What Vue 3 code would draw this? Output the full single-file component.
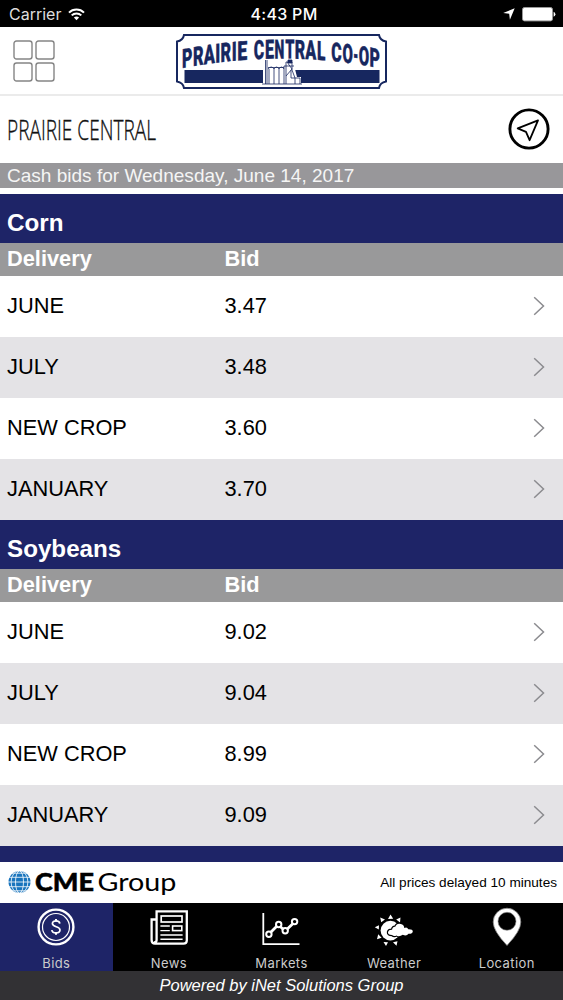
<template>
  <div class="app">
    <!-- 状态栏 -->
    <div class="status-bar">
      <div class="status-left">
        <span>Carrier</span>
        <svg width="17" height="13" viewBox="0 0 17 13" fill="none" stroke="#fff" stroke-width="2">
          <path d="M1 4.6C5 0.4 12 0.4 16 4.6" />
          <path d="M3.7 7.4C6.3 4.8 10.7 4.8 13.3 7.4" />
          <path d="M8.5 12.2L5.9 9.6C7.4 8.2 9.6 8.2 11.1 9.6Z" fill="#fff" stroke="none" />
        </svg>
      </div>
      <span class="status-time">4:43 PM</span>
      <div class="status-right">
        <svg width="12" height="12" viewBox="0 0 12 12">
          <path d="M11.7 0.2L6.9 11.8L6.2 5.8L0.2 5.1Z" fill="#fff" />
        </svg>
        <svg width="34" height="15" viewBox="0 0 34 15">
          <rect x="0.5" y="0.5" width="30" height="13.4" rx="2" fill="#fff" stroke="#999" />
          <path d="M31.6 4.7Q33.4 5.3 33.4 7.2Q33.4 9.1 31.6 9.7Z" fill="#fff" />
        </svg>
      </div>
    </div>

    <!-- 顶部 logo -->
    <header class="header">
      <svg class="menu" width="42" height="42" viewBox="0 0 42 42" fill="#fff" stroke="#858585" stroke-width="1.4">
        <rect x="1" y="1" width="18" height="18" rx="2.5" />
        <rect x="23" y="1" width="18" height="18" rx="2.5" />
        <rect x="1" y="23" width="18" height="18" rx="2.5" />
        <rect x="23" y="23" width="18" height="18" rx="2.5" />
      </svg>
      <svg class="logo" width="211" height="55" viewBox="0 0 211 55">
        <path
          d="M8 1H203Q204 6.5 210 7.5V47.5Q204 48.5 203 54H8Q7 48.5 1 47.5V7.5Q7 6.5 8 1Z"
          fill="#fff"
          stroke="#17275f"
          stroke-width="2"
        />
        <rect x="8.5" y="36" width="195" height="13" fill="#17275f" />
        <text
          v-for="(item, index) in logoLetters"
          :key="index"
          class="logo-letter"
          :transform="letterTransform(item)"
          :textLength="item.w + 0.4"
          lengthAdjust="spacingAndGlyphs"
        >{{ item.c }}</text>
        <path d="M87 50.5V34H92V32H107V30L109 26H116L118 31L121 43H125V50.5Z" fill="#fff" />
        <g fill="none" stroke="#17275f" stroke-width="0.8">
          <path d="M89.5 50V26M91 50V26M92 33.5H108M93 35V50M98 35V50M103 35V50M108 32V50" />
          <path d="M92 35Q95.5 31 98 35Q100.5 31 103 35Q105.5 31 108 35" />
          <path d="M110 50V28H116V36L119 44V50M108 32H118M111 28L116 35L110 42M115 36V44H124V50M86 50H126" />
          <path d="M112 26H116V29H112Z" fill="#17275f" />
        </g>
      </svg>
    </header>

    <div class="title-row">
      <svg class="title" width="156" height="46" viewBox="0 0 156 46">
        <text x="0" y="33" textLength="149" lengthAdjust="spacingAndGlyphs">PRAIRIE CENTRAL</text>
      </svg>
      <svg class="locate" width="42" height="42" viewBox="0 0 42 42" fill="none" stroke="#000">
        <circle cx="21" cy="21" r="19.1" stroke-width="2.9" />
        <path d="M30 12.3L9.7 20.4L18 23.8L21.6 32.2Z" stroke-width="1.8" stroke-linejoin="round" />
      </svg>
    </div>
    <div class="date-bar">Cash bids for Wednesday, June 14, 2017</div>

    <!-- 报价列表 -->
    <main class="bids">
      <section v-for="crop in crops" :key="crop.name">
        <h2>{{ crop.name }}</h2>
        <div class="columns">
          <span>Delivery</span>
          <span>Bid</span>
        </div>
        <div v-for="row in crop.rows" :key="row.month" class="row">
          <span>{{ row.month }}</span>
          <span>{{ row.bid }}</span>
          <svg width="12" height="20" viewBox="0 0 12 20" fill="none" stroke="#8b8b8f" stroke-width="1.5">
            <path d="M1.2 1.3L10.5 10L1.2 18.7" />
          </svg>
        </div>
      </section>
      <div class="next-section"></div>
    </main>

    <div class="cme">
      <svg width="172" height="36" viewBox="0 0 172 36">
        <circle cx="11.5" cy="17" r="11" fill="#1874bd" />
        <g fill="none" stroke="#fff" stroke-width="0.8">
          <ellipse cx="11.5" cy="17" rx="4" ry="11" />
          <ellipse cx="11.5" cy="17" rx="8.4" ry="11.4" />
          <path d="M0 17H23M1 12.3H22M1 21.7H22M3 8.2H20M3 25.8H20" />
        </g>
        <text class="cme-bold" x="27" y="25.8" textLength="59" lengthAdjust="spacingAndGlyphs">CME</text>
        <text class="cme-light" x="89.4" y="25.8" textLength="79" lengthAdjust="spacingAndGlyphs">Group</text>
      </svg>
      <span>All prices delayed 10 minutes</span>
    </div>

    <!-- 底部导航 -->
    <nav class="tabs">
      <div
        v-for="tab in tabs"
        :key="tab"
        class="tab"
        :class="{ active: currentTab === tab }"
        @click="currentTab = tab"
      >
        <svg width="40" height="40" viewBox="0 0 40 40" fill="none" stroke="#fff">
          <g v-if="tab === 'Bids'">
            <circle cx="20" cy="20" r="17.4" stroke-width="2.4" />
            <circle cx="20" cy="20" r="13.5" stroke-width="1.2" />
            <path d="M23.8 16.6C23.6 12.9 16.4 12.9 16.4 16.5C16.4 20.6 24 19 24 23C24 26.8 16 26.8 15.9 23" stroke-width="1.7" />
            <path d="M20 12V14.4M20 25.2V27.8" stroke-width="2" />
          </g>
          <g v-else-if="tab === 'News'">
            <path d="M7.4 12.5H2.6V33Q2.6 36.6 6 36.6H34.5Q37.8 36.6 37.8 33.5V4.4H7.6V33Q7.6 35.5 5 35.5" stroke-width="2.3" />
            <rect x="12.2" y="9" width="20.8" height="6" stroke-width="1.7" />
            <rect x="23.6" y="19" width="9.2" height="4.6" stroke-width="1.6" />
            <path d="M11.4 19H20.8M11.4 23.6H20.8M11.4 28H33.6M11.4 32.3H33.6" stroke-width="1.4" />
          </g>
          <g v-else-if="tab === 'Markets'">
            <path d="M2.3 6V37.2H38.5" stroke-width="1.8" />
            <path d="M9.5 25.5L16 19M19.4 19.8L22.5 22.5M26 22.2L31.8 16.7" stroke-width="2.8" />
            <g stroke-width="2">
              <circle cx="7.9" cy="27.2" r="2.7" />
              <circle cx="17.7" cy="17.5" r="2.7" />
              <circle cx="24.2" cy="23.8" r="2.7" />
              <circle cx="33.6" cy="14.6" r="2.7" />
            </g>
          </g>
          <g v-else-if="tab === 'Weather'" fill="#fff" stroke="none">
            <circle cx="16.4" cy="23.6" r="9.8" />
            <path d="M16.5 7.6L14 12L19.2 11.8ZM6.2 10.6L7.2 15.3L11 12.4ZM26.5 10.5L22.2 12.6L26 15.5ZM0.8 20.2L5 18.2L4.8 22.6ZM3 32.2L4.2 27.3L7.6 30.8ZM12 39L9.5 34.9L14 35.3ZM22.5 38.8L19 35.3L23.5 34.2Z" />
            <path
              d="M18 28Q13.6 28 14 25Q14.7 22.4 18 22.7Q18.6 19.6 21.2 19.8Q22.8 15.8 26.8 16.9Q30 17.5 30.3 21Q33 19.5 34.3 22.2Q38.8 22 38.8 24.5Q38.5 27 34.5 26.8Q32.5 29.5 28.8 27.8Q25 30.4 22.5 28.4Q20 29.6 18 28Z"
              stroke="#000"
              stroke-width="2.4"
              paint-order="stroke"
            />
          </g>
          <g v-else>
            <path d="M20 38.4Q6.2 24 6.2 15A13.8 13.8 0 0 1 33.8 15Q33.8 24 20 38.4Z" fill="#fff" stroke="#888" stroke-width="0.8" />
            <circle cx="20" cy="14.3" r="9" fill="#000" stroke="#888" stroke-width="0.6" />
          </g>
        </svg>
        <span>{{ tab }}</span>
      </div>
    </nav>
    <footer class="powered">Powered by iNet Solutions Group</footer>
  </div>
</template>

<script setup>
import { ref } from 'vue';

// 报价数据
const crops = ref([
  {
    name: 'Corn',
    rows: [
      { month: 'JUNE', bid: '3.47' },
      { month: 'JULY', bid: '3.48' },
      { month: 'NEW CROP', bid: '3.60' },
      { month: 'JANUARY', bid: '3.70' }
    ]
  },
  {
    name: 'Soybeans',
    rows: [
      { month: 'JUNE', bid: '9.02' },
      { month: 'JULY', bid: '9.04' },
      { month: 'NEW CROP', bid: '8.99' },
      { month: 'JANUARY', bid: '9.09' }
    ]
  }
]);

const tabs = ['Bids', 'News', 'Markets', 'Weather', 'Location'];
const currentTab = ref('Bids');

// logo 字母：左边位置和宽度
const logoLetters = [
  { c: 'P', x: 6.1, w: 10 },
  { c: 'R', x: 17, w: 10.2 },
  { c: 'A', x: 27.8, w: 10.8 },
  { c: 'I', x: 39.2, w: 4.6 },
  { c: 'R', x: 44.4, w: 10.2 },
  { c: 'I', x: 55.8, w: 4.6 },
  { c: 'E', x: 61.3, w: 9.6 },
  { c: 'C', x: 77.8, w: 10 },
  { c: 'E', x: 89, w: 8.6 },
  { c: 'N', x: 98.4, w: 9.4 },
  { c: 'T', x: 109.2, w: 8.8 },
  { c: 'R', x: 118.8, w: 10 },
  { c: 'A', x: 129.2, w: 10.6 },
  { c: 'L', x: 141, w: 8 },
  { c: 'C', x: 155.2, w: 10 },
  { c: 'O', x: 166.5, w: 10 },
  { c: '-', x: 177.2, w: 4.6 },
  { c: 'O', x: 182.8, w: 10 },
  { c: 'P', x: 193.6, w: 10 }
];

// 字母沿拱形排列，底边随弧线倾斜
const letterTransform = (item) => {
  const d = (item.x + item.w / 2 - 105.5) / 100;
  const y = 24.5 + 10 * d * d;
  const angle = Math.atan(0.2 * d) * 180 / Math.PI;
  return `translate(${item.x} ${y - 0.1 * d * item.w}) skewY(${angle})`;
};
</script>

<style>
body {
  margin: 0;
}
</style>

<style scoped>
.app {
  width: 563px;
  height: 1000px;
  display: flex;
  flex-direction: column;
  overflow: hidden;
  background: #fff;
  color: #000;
  font-family: "Liberation Sans", Arial, sans-serif;
}

.status-bar {
  height: 27px;
  flex: none;
  display: grid;
  grid-template-columns: 1fr auto 1fr;
  align-items: center;
  padding: 1px 0 0;
  box-sizing: border-box;
  background: #000;
  color: #fff;
  font-family: Inter, Roboto, sans-serif;
  font-size: 16px;
}

.status-left {
  display: flex;
  align-items: center;
  gap: 7px;
  padding-left: 9px;
  color: #ddd;
}

.status-time {
  padding-left: 5px;
  font-weight: 500;
  letter-spacing: 0.3px;
}

.status-right {
  display: flex;
  justify-content: flex-end;
  align-items: center;
  gap: 7px;
  padding-right: 7px;
}

.header {
  height: 69px;
  flex: none;
  display: flex;
  box-sizing: border-box;
  border-bottom: 2px solid #ebebeb;
}

.menu {
  margin: 13px 0 0 13px;
}

.logo {
  margin: 7px 0 0 121px;
}

.logo-letter {
  font-family: Roboto, sans-serif;
  font-size: 26.5px;
  font-weight: 900;
  fill: #17275f;
  stroke: #17275f;
  stroke-width: 0.4px;
}

.title-row {
  height: 67px;
  flex: none;
  display: flex;
  align-items: center;
  justify-content: space-between;
  padding: 0 13px 0 7px;
}

.title text {
  font-family: "Open Sans", sans-serif;
  font-size: 28px;
  font-weight: 300;
  fill: #111;
  stroke: #111;
  stroke-width: 0.35px;
}

.locate {
  margin-bottom: 2px;
}

.date-bar {
  height: 24.5px;
  flex: none;
  margin-bottom: 6.6px;
  padding-left: 7px;
  background: #98979a;
  color: #f5f5f5;
  font-size: 19.05px;
  line-height: 25px;
}

.bids {
  height: 668.4px;
  flex: none;
}

h2 {
  height: 49px;
  margin: 0;
  padding-left: 7px;
  background: #1e2467;
  color: #fff;
  font-size: 24.2px;
  line-height: 58px;
}

.columns,
.row {
  display: grid;
  grid-template-columns: 217.5px 1fr auto;
  padding: 0 18px 0 7px;
  font-size: 21.8px;
}

.columns {
  height: 32.7px;
  background: #99999a;
  color: #fff;
  font-weight: bold;
  line-height: 31px;
}

.row {
  height: 61.05px;
  align-items: center;
  background: #fff;
}

.row:nth-child(even) {
  background: #e4e3e6;
}

.next-section {
  height: 16.6px;
  background: #1e2467;
}

.cme {
  height: 40.5px;
  flex: none;
  display: flex;
  align-items: center;
  justify-content: space-between;
  padding: 0 6px 0 8px;
  font-size: 13.6px;
}

.cme-bold {
  font-family: Lato, sans-serif;
  font-size: 25px;
  font-weight: 900;
  stroke: #000;
  stroke-width: 0.5px;
}

.cme-light {
  font-family: Lato, sans-serif;
  font-size: 25px;
  font-weight: 400;
}

.tabs {
  height: 68px;
  flex: none;
  display: grid;
  grid-template-columns: repeat(5, 1fr);
  background: #000;
}

.tab {
  display: flex;
  flex-direction: column;
  align-items: center;
  padding-top: 4px;
  color: #ccc;
  font-family: Inter, Roboto, sans-serif;
  font-size: 13px;
  letter-spacing: 0.4px;
  cursor: pointer;
}

.tab span {
  margin-top: 8px;
  line-height: 17px;
}

.tab.active {
  background: #1e2467;
}

.powered {
  flex: 1;
  background: #323134;
  color: #fff;
  font-size: 16.5px;
  font-style: italic;
  line-height: 29px;
  text-align: center;
}
</style>
